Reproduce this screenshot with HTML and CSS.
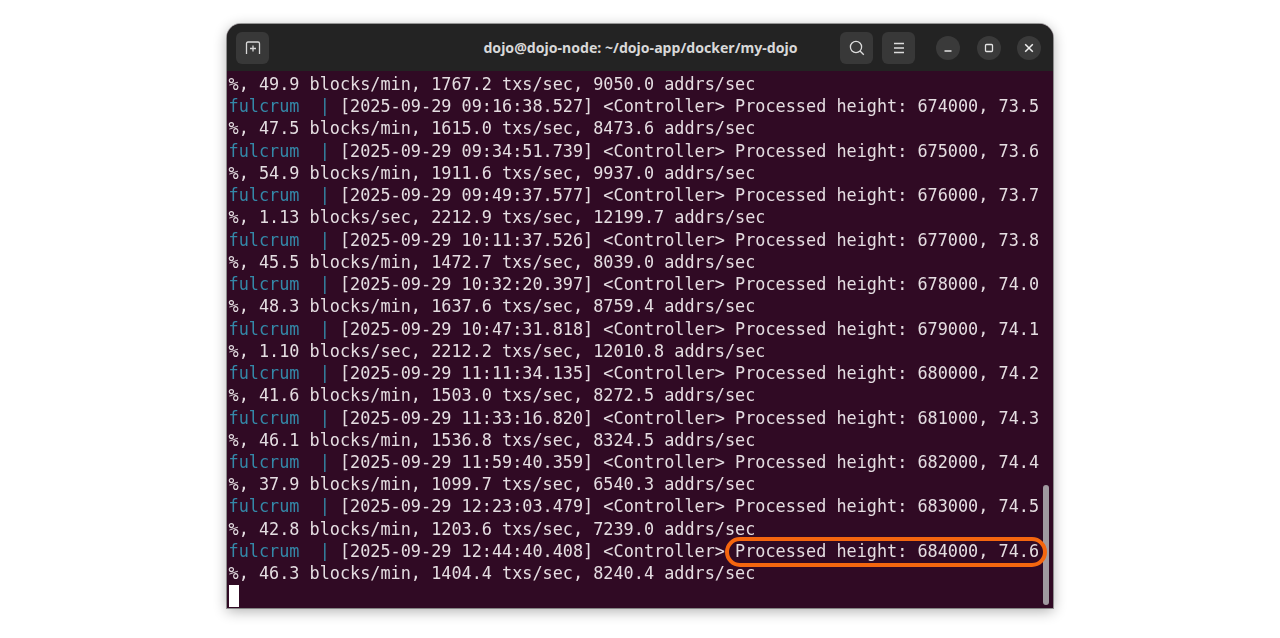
FILE: index.html
```html
<!DOCTYPE html>
<html lang="en">
<head>
<meta charset="utf-8">
<title>dojo@dojo-node: ~/dojo-app/docker/my-dojo</title>
<link rel="stylesheet" href="styles.css">
</head>
<body>
<main class="window">
  <header class="titlebar">
    <button class="tool" aria-label="New tab">
      <svg width="16" height="16" viewBox="0 0 16 16" fill="none" stroke="#d8d8d8" stroke-width="1.3"><path d="M1.500 14V3.500q0-1.500 1.500-1.500h10q1.500 0 1.500 1.500V14"/><path d="M8 5.500v6M5 8.500h6"/></svg>
    </button>
    <div class="title">dojo@dojo-node: ~/dojo-app/docker/my-dojo</div>
    <div class="actions">
      <button class="tool" aria-label="Search">
        <svg width="16" height="16" viewBox="0 0 16 16" fill="none" stroke="#dcdcdc" stroke-width="1.300"><circle cx="7" cy="7" r="5.600"/><path d="M11 11l3.800 3.800"/></svg>
      </button>
      <button class="tool" aria-label="Menu">
        <svg width="14" height="14" viewBox="0 0 14 14" fill="none" stroke="#dcdcdc" stroke-width="1.300"><path d="M2 2.500h10M2 7h10M2 11.500h10"/></svg>
      </button>
    </div>
    <div class="controls">
      <button class="ctl" aria-label="Minimize"><svg width="10" height="10" viewBox="0 0 10 10" fill="none" stroke="#e4e4e4" stroke-width="1.300"><path d="M1.500 8h7"/></svg></button>
      <button class="ctl" aria-label="Maximize"><svg width="10" height="10" viewBox="0 0 10 10" fill="none" stroke="#e4e4e4" stroke-width="1.300"><rect x="1.500" y="1.500" width="7" height="7" rx="1"/></svg></button>
      <button class="ctl" aria-label="Close"><svg width="10" height="10" viewBox="0 0 10 10" fill="none" stroke="#f0f0f0" stroke-width="1.500"><path d="M1.200 1.200l7.600 7.600M8.800 1.200L1.200 8.800"/></svg></button>
    </div>
  </header>
  <section class="term">
    <div class="log">
      <div class="line"><span>%, 49.9 blocks/min, 1767.2 txs/sec, 9050.0 addrs/sec</span></div>
      <div class="line"><span class="svc">fulcrum  | </span><span>[2025-09-29 09:16:38.527] &lt;Controller&gt; Processed height: 674000, 73.5</span></div>
      <div class="line"><span>%, 47.5 blocks/min, 1615.0 txs/sec, 8473.6 addrs/sec</span></div>
      <div class="line"><span class="svc">fulcrum  | </span><span>[2025-09-29 09:34:51.739] &lt;Controller&gt; Processed height: 675000, 73.6</span></div>
      <div class="line"><span>%, 54.9 blocks/min, 1911.6 txs/sec, 9937.0 addrs/sec</span></div>
      <div class="line"><span class="svc">fulcrum  | </span><span>[2025-09-29 09:49:37.577] &lt;Controller&gt; Processed height: 676000, 73.7</span></div>
      <div class="line"><span>%, 1.13 blocks/sec, 2212.9 txs/sec, 12199.7 addrs/sec</span></div>
      <div class="line"><span class="svc">fulcrum  | </span><span>[2025-09-29 10:11:37.526] &lt;Controller&gt; Processed height: 677000, 73.8</span></div>
      <div class="line"><span>%, 45.5 blocks/min, 1472.7 txs/sec, 8039.0 addrs/sec</span></div>
      <div class="line"><span class="svc">fulcrum  | </span><span>[2025-09-29 10:32:20.397] &lt;Controller&gt; Processed height: 678000, 74.0</span></div>
      <div class="line"><span>%, 48.3 blocks/min, 1637.6 txs/sec, 8759.4 addrs/sec</span></div>
      <div class="line"><span class="svc">fulcrum  | </span><span>[2025-09-29 10:47:31.818] &lt;Controller&gt; Processed height: 679000, 74.1</span></div>
      <div class="line"><span>%, 1.10 blocks/sec, 2212.2 txs/sec, 12010.8 addrs/sec</span></div>
      <div class="line"><span class="svc">fulcrum  | </span><span>[2025-09-29 11:11:34.135] &lt;Controller&gt; Processed height: 680000, 74.2</span></div>
      <div class="line"><span>%, 41.6 blocks/min, 1503.0 txs/sec, 8272.5 addrs/sec</span></div>
      <div class="line"><span class="svc">fulcrum  | </span><span>[2025-09-29 11:33:16.820] &lt;Controller&gt; Processed height: 681000, 74.3</span></div>
      <div class="line"><span>%, 46.1 blocks/min, 1536.8 txs/sec, 8324.5 addrs/sec</span></div>
      <div class="line"><span class="svc">fulcrum  | </span><span>[2025-09-29 11:59:40.359] &lt;Controller&gt; Processed height: 682000, 74.4</span></div>
      <div class="line"><span>%, 37.9 blocks/min, 1099.7 txs/sec, 6540.3 addrs/sec</span></div>
      <div class="line"><span class="svc">fulcrum  | </span><span>[2025-09-29 12:23:03.479] &lt;Controller&gt; Processed height: 683000, 74.5</span></div>
      <div class="line"><span>%, 42.8 blocks/min, 1203.6 txs/sec, 7239.0 addrs/sec</span></div>
      <div class="line"><span class="svc">fulcrum  | </span><span>[2025-09-29 12:44:40.408] &lt;Controller&gt; Processed height: 684000, 74.6</span></div>
      <div class="line"><span>%, 46.3 blocks/min, 1404.4 txs/sec, 8240.4 addrs/sec</span></div>
    </div>
    <div class="cursor"></div>
    <div class="scrollbar"></div>
    <div class="oval"></div>
  </section>
</main>
</body>
</html>
```
FILE: styles.css
```css
* { box-sizing: border-box; }
html, body { margin: 0; height: 100%; }
body {
  background: #fff;
  display: flex;
  justify-content: center;
  align-items: flex-start;
  padding-top: 24px;
  overflow: hidden;
}
.window {
  width: 826px;
  height: 584px;
  border-radius: 14px 14px 0 0;
  overflow: hidden;
  display: flex;
  flex-direction: column;
  background: #300a24;
  box-shadow: 0 3px 14px rgba(0, 0, 0, .32), 0 0 0 1px rgba(0, 0, 0, .35);
}
.titlebar {
  height: 47px;
  flex: none;
  background: #232323;
  display: flex;
  align-items: center;
  padding: 0 8px 0 9px;
}
button { border: 0; padding: 0; margin: 0; display: flex; align-items: center; justify-content: center; }
.tool {
  width: 33px;
  height: 32px;
  border-radius: 6px;
  background: #383838;
}
.title {
  flex: 1;
  text-align: center;
  color: #d8d8d8;
  font: 700 14.100px "Noto Sans", "Open Sans", sans-serif;
  margin-left: 212px;
  margin-bottom: 1px;
}
.actions { display: flex; gap: 9px; margin-left: 40px; }
.controls { display: flex; gap: 16.500px; margin-left: 21px; margin-right: 4px; }
.ctl {
  width: 24px;
  height: 24px;
  border-radius: 50%;
  background: #3a3a3a;
}
.term {
  flex: 1;
  position: relative;
  padding: 2px 0 0 1.500px;
  color: #e4dde1;
}
.log {
  font: 400 16.830px/22.240px "DejaVu Sans Mono", monospace;
  filter: blur(0.3px);
}
.line { height: 22.240px; white-space: pre; }
.svc { color: #3488a8; }
.cursor {
  width: 10px;
  height: 22px;
  background: #fff;
  margin-top: 1px;
}
.scrollbar {
  position: absolute;
  right: 4px;
  top: 414px;
  width: 6px;
  height: 120px;
  border-radius: 3px;
  background: #a09aa0;
}
.oval {
  position: absolute;
  left: 498px;
  top: 466px;
  width: 322px;
  height: 30px;
  border: 4.500px solid #f4660f;
  border-radius: 15px;
}
```
